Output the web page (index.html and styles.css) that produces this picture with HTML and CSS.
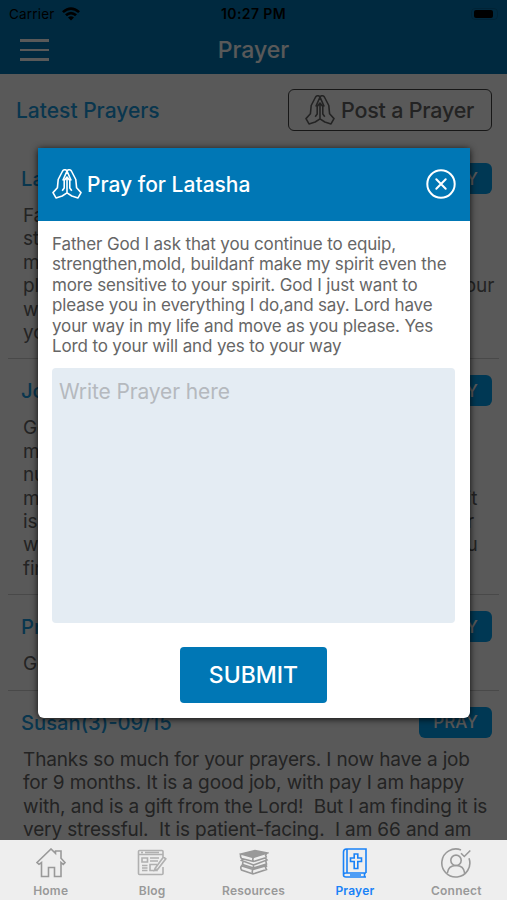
FILE: index.html
```
<!DOCTYPE html>
<html lang="en">
<head>
    <meta charset="UTF-8">
    <meta name="viewport" content="width=device-width, initial-scale=1.0">
    <title>Prayer</title>
    <link rel="stylesheet" href="styles.css">
</head>
<body>
    <svg class="symbols" aria-hidden="true">
        <symbol id="hands" viewBox="0 0 30 30">
            <path d="M15 2.2 C14 .2 11.8 .3 10.6 2 L6.2 10.5 L5.4 18.8 L1 23.6 L4 28.9 L10.2 27 L15 23.8 L19.8 27 L26 28.9 L29 23.6 L24.6 18.8 L23.8 10.5 L19.4 2 C18.2 .3 16 .2 15 2.2 Z"/>
            <path d="M15 2.2 L10.8 11.5 M15 2.2 L19.2 11.5 M10.2 21.8 L12.2 19 V11.5 L15 8 L17.8 11.5 V19 L19.8 21.8 M15 10 V23.8"/>
        </symbol>
    </svg>

    <div class="screen">
        <header class="header">
            <div class="status-bar">
                <div class="carrier">
                    <span>Carrier</span>
                    <svg class="wifi" viewBox="0 0 18 14">
                        <path d="M0 4.2 Q9 -3.6 18 4.2 L16.2 6.1 Q9 -.1 1.8 6.1 Z M3 7.3 Q9 2.2 15 7.3 L13.1 9.2 Q9 5.9 4.9 9.2 Z M6 10.4 Q9 8 12 10.4 L9 13.5 Z"/>
                    </svg>
                </div>
                <span class="clock">10:27 PM</span>
                <div class="battery"><span class="battery-level"></span></div>
            </div>
            <div class="title-bar">
                <div class="menu-btn"><span></span><span></span><span></span></div>
                <h1 class="page-title">Prayer</h1>
            </div>
        </header>

        <main class="content">
            <div class="list-head">
                <h2 class="list-title">Latest Prayers</h2>
                <button class="post-btn"><svg class="hands-icon"><use href="#hands"/></svg><span>Post a Prayer</span></button>
            </div>
            <div class="prayer-item">
                <div class="prayer-head"><h3>Latasha(0)-09/16</h3><button class="pray-btn">PRAY</button></div>
                <p>Father God I ask that you continue to equip,<br>strengthen,mold, buildanf make my spirit even<br>more sensitive to your spirit. God I just want to<br>please you in everything I do,and say. Lord have your<br>way in my life and move as you please. Yes Lord<br>your will and yes to your way</p>
            </div>
            <div class="prayer-item">
                <div class="prayer-head"><h3>John(2)-09/15</h3><button class="pray-btn">PRAY</button></div>
                <p>God, please be with our family and<br>my mother as she recovers. The<br>nurses have been kind and the<br>medical team is caring for her. We do all trust that it<br>is going to be good and we are so thankful for your<br>work in all lives. Please keep her safe until then you<br>finish the healing</p>
            </div>
            <div class="prayer-item">
                <div class="prayer-head"><h3>Priya(1)-09/15</h3><button class="pray-btn">PRAY</button></div>
                <p>Good health for my family</p>
            </div>
            <div class="prayer-item">
                <div class="prayer-head"><h3>Susan(3)-09/15</h3><button class="pray-btn">PRAY</button></div>
                <p>Thanks so much for your prayers. I now have a job<br>for 9 months. It is a good job, with pay I am happy<br>with, and is a gift from the Lord!&nbsp; But I am finding it is<br>very stressful.&nbsp; It is patient-facing.&nbsp; I am 66 and am</p>
            </div>
        </main>

        <nav class="tab-bar">
            <a class="tab">
                <svg viewBox="0 0 30 30"><path d="M1 14.5 L15 1 L19.5 5.3 V3 H25 V10.3 L29 14.5 L27.2 16.3 L25 14.5 V28.5 H18.5 V19.5 H12.5 V28.5 H5.5 V14.5 L3 16.3 Z"/></svg>
                <span>Home</span>
            </a>
            <a class="tab tab-blog">
                <svg viewBox="0 0 30 30"><path d="M26 9 V3.5 Q26 2.5 25 2.5 H2.5 Q1.5 2.5 1.5 3.5 V25.5 Q1.5 26.5 2.5 26.5 H25 Q26 26.5 26 25.5 V19 M1.5 6.5 H26 M5 10 H10.5 V14 H5 Z M13 10 H22 M13 13 H21 M5 17.5 H10.5 M5 20 H10.5 M5 22.5 H10.5 M20 16.5 H13 V22.5 H20 V20.5 M18 20.5 L26.5 9 L28.8 10.8 L20.5 21.5 L17.5 22.5 Z M4 4.5 H6 M8 4.5 H22"/></svg>
                <span>Blog</span>
            </a>
            <a class="tab">
                <svg viewBox="0 0 30 30"><path class="solid" d="M2 6 L16 2.5 L28 5 L14 9.5 Z"/><path d="M2 6 Q.8 8.5 2.5 10.5 L14.5 13.5 L27.5 9.5 M14.5 9.5 Q13 11.5 14.5 13.5 M28 5 L26.5 7 L27.5 9.5 M4 11.2 L2.5 12.5 L14.5 17 L28 12 L26.5 10.2 M4 14 L3.5 16.5 L14.5 20 L27.5 16 L26.8 13 M14.5 17 V20 M3 17.3 Q.8 19.5 2.5 22 L14 26 L27.5 21.5 L26.5 19.5 L28 17.5 M3 18 L14 21.5 L28 17.5 M14 21.5 Q12.5 23.5 14 26"/></svg>
                <span>Resources</span>
            </a>
            <a class="tab active">
                <svg viewBox="0 0 30 30"><path d="M26 25 V1 H6.5 Q3.5 1 3.5 4 V27 Q3.5 29 6 29 H26 M26 25 H6 Q3.5 25 3.5 27 M7 1 V25 M24.5 25 V29 M14.2 6 H17.8 V10 H21.5 V13.5 H17.8 V20.5 H14.2 V13.5 H10.5 V10 H14.2 Z M10 27 H21"/></svg>
                <span>Prayer</span>
            </a>
            <a class="tab">
                <svg viewBox="0 0 30 30"><path d="M20 2 A14 14 0 1 0 28 10.3 M20 5.3 L23.3 8.5 L29.3 2.5"/><circle cx="15" cy="12.3" r="5.2"/><path d="M6.3 25.2 Q7.2 17.5 15 17.5 Q22.8 17.5 23.7 25.2"/></svg>
                <span>Connect</span>
            </a>
        </nav>

        <div class="overlay">
            <div class="modal">
                <div class="modal-head">
                    <svg class="hands-icon"><use href="#hands"/></svg>
                    <h2>Pray for Latasha</h2>
                    <svg class="close-icon" viewBox="0 0 30 30"><circle cx="15" cy="15" r="13.7"/><path d="M10.3 10.3 L19.7 19.7 M19.7 10.3 L10.3 19.7"/></svg>
                </div>
                <div class="modal-body">
                    <p>Father God I ask that you continue to equip,<br>strengthen,mold, buildanf make my spirit even the<br>more sensitive to your spirit. God I just want to<br>please you in everything I do,and say. Lord have<br>your way in my life and move as you please. Yes<br>Lord to your will and yes to your way</p>
                    <textarea class="prayer-input" placeholder="Write Prayer here"></textarea>
                    <button class="submit-btn">SUBMIT</button>
                </div>
            </div>
        </div>
    </div>
</body>
</html>
```
FILE: styles.css
```
* {
    box-sizing: border-box;
}

body {
    margin: 0;
    font-family: Inter, "Liberation Sans", sans-serif;
}

h1, h2, h3, p {
    margin: 0;
}

button {
    font-family: inherit;
    border: none;
    padding: 0;
}

.symbols {
    position: absolute;
    width: 0;
    height: 0;
}

.screen {
    position: relative;
    width: 507px;
    height: 900px;
    overflow: hidden;
    display: flex;
    flex-direction: column;
    background-color: #fff;
}

.header {
    height: 74px;
    flex: none;
    background-color: #0077b5;
}

.status-bar {
    display: grid;
    grid-template-columns: 1fr auto 1fr;
    align-items: center;
    height: 27px;
    padding: 0 9px;
    font-size: 13.5px;
    color: #000;
}

.carrier {
    display: flex;
    align-items: center;
    gap: 7px;
    letter-spacing: 0.2px;
}

.wifi {
    width: 18px;
    height: 14px;
}

.clock {
    font-size: 14px;
    font-weight: 600;
    letter-spacing: 0.4px;
}

.battery {
    justify-self: end;
    width: 27px;
    height: 12px;
    padding: 1px 2px;
    border: 1px solid rgba(0, 0, 0, 0.15);
    border-radius: 4px;
}

.battery-level {
    display: block;
    width: 19px;
    height: 8px;
    border-radius: 2px;
    background-color: #000;
}

.title-bar {
    display: grid;
    grid-template-columns: 1fr auto 1fr;
    align-items: center;
    height: 46px;
    padding: 0 20px;
}

.menu-btn {
    display: flex;
    flex-direction: column;
    gap: 7px;
    width: 29px;
}

.menu-btn span {
    height: 2.5px;
    background-color: #fff;
}

.page-title {
    font-size: 23px;
    font-weight: 500;
    color: #fff;
}

.content {
    flex: 1;
    min-height: 0;
    overflow: hidden;
    padding: 0 8px;
}

.list-head {
    display: flex;
    justify-content: space-between;
    align-items: center;
    height: 73px;
    padding: 0 7px 1px 8px;
}

.list-title {
    font-size: 21px;
    font-weight: 500;
    color: #1a9be0;
}

.post-btn {
    display: flex;
    align-items: center;
    gap: 6px;
    width: 204px;
    height: 42px;
    padding-left: 16px;
    border: 1.5px solid #444;
    border-radius: 6px;
    background: none;
    font-size: 21.5px;
    font-weight: 500;
    letter-spacing: -0.22px;
    color: #666;
    white-space: nowrap;
}

.hands-icon {
    width: 30px;
    height: 30px;
    flex: none;
    fill: none;
    stroke: currentColor;
    stroke-width: 1.6;
    stroke-linejoin: round;
}

.prayer-item {
    padding: 16px 7px 14px 13px;
    border-bottom: 1px solid #d0d0d0;
}

.prayer-head {
    display: flex;
    justify-content: space-between;
    align-items: center;
    height: 31px;
    margin-bottom: 10px;
}

.prayer-head h3 {
    font-size: 20.2px;
    font-weight: 500;
    color: #1a9be0;
}

.pray-btn {
    width: 73px;
    height: 31px;
    border-radius: 6px;
    background-color: #00a0f0;
    color: #fff;
    font-size: 17px;
    font-weight: 500;
}

.prayer-item p {
    padding-left: 2px;
    font-size: 19px;
    line-height: 23.4px;
    letter-spacing: -0.13px;
    color: #666;
    white-space: nowrap;
}

.tab-bar {
    position: relative;
    z-index: 2;
    display: flex;
    height: 60px;
    flex: none;
    background-color: #eee;
}

.tab {
    flex: 1;
    display: flex;
    flex-direction: column;
    align-items: center;
    padding-top: 8px;
    font-size: 12px;
    font-weight: 600;
    letter-spacing: 0.2px;
    color: #999;
}

.tab svg {
    width: 30px;
    height: 30px;
    margin-bottom: 5px;
    fill: none;
    stroke: currentColor;
    stroke-width: 1.6;
}

.tab .solid {
    fill: currentColor;
}

.tab-blog svg {
    color: #b0b0b0;
}

.tab.active {
    color: #1a82f7;
}

.overlay {
    position: absolute;
    inset: 0 0 60px;
    padding: 148px 37px 0 38px;
    background-color: rgba(0, 0, 0, 0.65);
}

.modal {
    height: 570px;
    border-radius: 2px 2px 6px 6px;
    background-color: #fff;
    box-shadow: 0 1px 7px rgba(0, 0, 0, 0.85);
}

.modal-head {
    display: flex;
    align-items: center;
    height: 73px;
    padding: 0 14px 1px;
    background-color: #0077b5;
    color: #fff;
}

.modal-head h2 {
    flex: 1;
    margin-left: 5px;
    font-size: 21px;
    font-weight: 500;
}

.close-icon {
    width: 30px;
    height: 30px;
    fill: none;
    stroke: #fff;
    stroke-width: 2;
    stroke-linecap: round;
}

.modal-body {
    display: flex;
    flex-direction: column;
    padding: 13px 15px 0 14px;
}

.modal-body p {
    font-size: 17px;
    line-height: 20.4px;
    letter-spacing: -0.14px;
    color: #666;
    white-space: nowrap;
}

.prayer-input {
    height: 255px;
    margin: 12px 0 24px;
    padding: 11px 7px;
    border: none;
    border-radius: 4px;
    background-color: #e4ecf3;
    font-family: inherit;
    font-size: 21px;
    letter-spacing: -0.12px;
    resize: none;
}

.prayer-input::placeholder {
    color: #b5b9be;
}

.submit-btn {
    align-self: center;
    width: 147px;
    height: 56px;
    border-radius: 4px;
    background-color: #0077b5;
    color: #fff;
    font-size: 23px;
    font-weight: 500;
}
```
